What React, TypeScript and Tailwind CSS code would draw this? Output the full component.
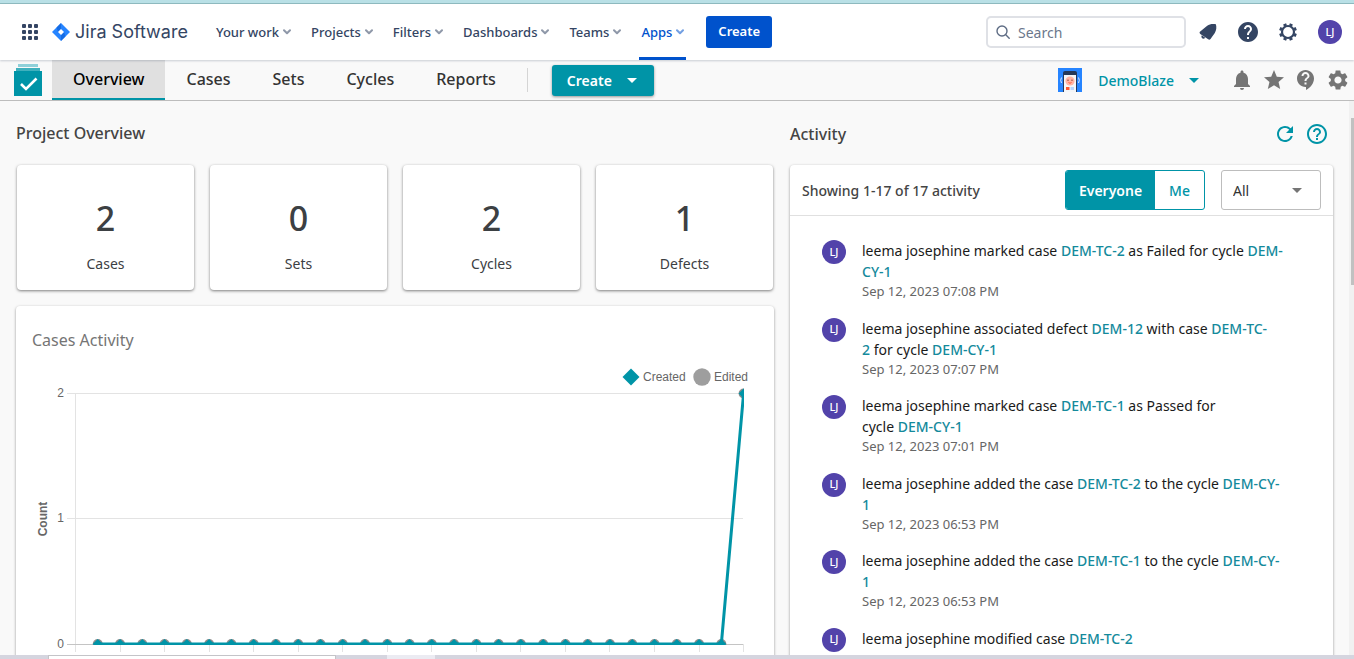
import React from "react";
import {
  MdArrowDropDown,
  MdContactSupport,
  MdHelp,
  MdHelpOutline,
  MdNotifications,
  MdRefresh,
  MdSettings,
  MdStar,
} from "react-icons/md";

const siteLinks = ["Your work", "Projects", "Filters", "Dashboards", "Teams", "Apps"];
const tabs = ["Overview", "Cases", "Sets", "Cycles", "Reports"];
const stats = [
  { value: 2, label: "Cases" },
  { value: 0, label: "Sets" },
  { value: 2, label: "Cycles" },
  { value: 1, label: "Defects" },
];

type Part = string | { link: string };
const activity: { parts: Part[]; time?: string }[] = [
  {
    parts: ["leema josephine marked case ", { link: "DEM-TC-2" }, " as Failed for cycle\u00a0", { link: "DEM-CY-1" }],
    time: "Sep 12, 2023 07:08 PM",
  },
  {
    parts: ["leema josephine associated defect ", { link: "DEM-12" }, " with case ", { link: "DEM-TC-2" }, "\u00a0for cycle ", { link: "DEM-CY-1" }],
    time: "Sep 12, 2023 07:07 PM",
  },
  {
    parts: ["leema josephine marked case ", { link: "DEM-TC-1" }, " as Passed for cycle\u00a0", { link: "DEM-CY-1" }],
    time: "Sep 12, 2023 07:01 PM",
  },
  {
    parts: ["leema josephine added the case ", { link: "DEM-TC-2" }, " to the cycle ", { link: "DEM-CY-1" }],
    time: "Sep 12, 2023 06:53 PM",
  },
  {
    parts: ["leema josephine added the case ", { link: "DEM-TC-1" }, " to the cycle ", { link: "DEM-CY-1" }],
    time: "Sep 12, 2023 06:53 PM",
  },
  {
    parts: ["leema josephine modified case ", { link: "DEM-TC-2" }],
  },
];

function Chevron() {
  return (
    <svg width="8" height="6" viewBox="0 0 8 6" fill="none" stroke="currentColor" strokeWidth="2" strokeLinecap="round" strokeLinejoin="round" className="opacity-55" aria-hidden="true">
      <path d="M1 1.2 4 4.2 7 1.2" />
    </svg>
  );
}

function JiraMark() {
  return (
    <svg width="18" height="18" viewBox="0 0 18 18" aria-hidden="true">
      <path d="M9 0 18 9 9 18 0 9Z" fill="#2684ff" />
      <path d="M9 0v6L6 9 4.500 4.500Z" fill="#0f62d9" opacity="0.7" />
      <path d="M9 18v-6l3-3 1.500 4.500Z" fill="#0f62d9" opacity="0.7" />
      <path d="M9 6 12 9 9 12 6 9Z" fill="#fff" />
    </svg>
  );
}

function AppGrid() {
  return (
    <svg width="16" height="16" viewBox="0 0 16 16" fill="#344563" aria-hidden="true">
      {[0, 6, 12].map((y) => [0, 6, 12].map((x) => <rect key={`${x}-${y}`} x={x} y={y} width="4" height="4" rx="1" />))}
    </svg>
  );
}

function Gear() {
  return (
    <svg width="18" height="18" viewBox="-9 -9 18 18" fill="none" stroke="#344563" aria-hidden="true">
      <circle r="6" strokeWidth="2.2" />
      {[0, 45, 90, 135, 180, 225, 270, 315].map((a) => (
        <path key={a} d="M0-6.500V-8.900" strokeWidth="3.2" transform={`rotate(${a + 22.5})`} />
      ))}
    </svg>
  );
}

function NotificationBell() {
  return (
    <svg width="18" height="18" viewBox="0 0 18 18" fill="#344563" aria-hidden="true">
      <path d="M16.900 1.300c-3-.6-6.400-.3-8.700 1.500L1.200 8.600c-.9.8-.8 1.600.1 2.300l7.900 5.400c.9.7 1.700.5 2.300-.4l4.300-6c1.700-2.600 1.900-5.800 1.100-8.600Z" />
      <path d="M2.800 12.300 6.200 14.800c-.8 1-2.200 1.200-3.100.4-.8-.7-.9-1.900-.3-2.900Z" />
    </svg>
  );
}

function AppLogo() {
  return (
    <svg width="28" height="32" viewBox="0 0 28 32" aria-hidden="true">
      <path d="M4 0h20v3H4z" fill="#8fd0d9" />
      <path d="M2 4h24v3H2z" fill="#3fb0bd" />
      <path d="M0 7h28v25H0z" fill="#0094a7" />
      <path d="m7 20 5 5 10.500-10.500" fill="none" stroke="#fff" strokeWidth="2.6" />
    </svg>
  );
}

function ProjectIcon() {
  return (
    <svg width="24" height="24" viewBox="0 0 24 24" aria-hidden="true">
      <path d="M0 0h24v24H0z" fill="#2684ff" />
      <path d="M5 24V5a2 2 0 0 1 2-2h10a2 2 0 0 1 2 2v19Z" fill="#253858" />
      <path d="M6 7h12v17H6z" fill="#f4f5f7" />
      <circle cx="12" cy="13" r="4.600" fill="#ffb3a3" />
      <path d="M9 12.200h2M13 12.200h2" stroke="#a5604f" strokeWidth="1" />
      <path d="M10.500 14.500q1.500 1.500 3 0" stroke="#ff5630" fill="none" />
      <path d="M8 19h3.500v3H8z" fill="#ff5630" />
      <path d="M12.500 19H16v3h-3.500z" fill="#b3d4ff" />
      <path d="M3.500 9.500q-1.600 2.800 0 5.500M20.500 9.500q1.600 2.800 0 5.500" stroke="#deebff" fill="none" />
    </svg>
  );
}

function Avatar() {
  return (
    <span className="flex size-6 shrink-0 items-center justify-center rounded-full bg-[#5243aa] text-[11px] font-medium text-white">
      LJ
    </span>
  );
}

function CasesChart() {
  const left = 59.5;
  const step = 22.27;
  const base = 338;
  const top = 87.5;
  const xs = Array.from({ length: 30 }, (_, i) => left + (i + 1) * step);
  const yOf = (i: number) => (i === 29 ? top : base);
  return (
    <svg viewBox="0 0 758 390" className="block w-full font-['Liberation_Sans',sans-serif]" role="img" aria-label="Cases created and edited">
      <defs>
        <clipPath id="plot">
          <rect x="59" y="82" width="669" height="257" />
        </clipPath>
      </defs>
      <path d="m615 62.500 8.500 8.500-8.500 8.500-8.500-8.500Z" fill="#0094a7" />
      <circle cx="686" cy="71" r="8.700" fill="#9e9e9e" />
      <g fontSize="12" fill="#666">
        <text x="627" y="75">Created</text>
        <text x="698" y="75">Edited</text>
        <text x="48" y="91" textAnchor="end">2</text>
        <text x="48" y="216" textAnchor="end">1</text>
        <text x="48" y="342" textAnchor="end">0</text>
        <text transform="translate(31 213) rotate(-90)" textAnchor="middle" fontWeight="bold">Count</text>
      </g>
      <g stroke="#e3e3e3" strokeWidth="1">
        <path d="M51 87.500H727M51 212.500H727M59.500 87V346" />
        {Array.from({ length: 16 }, (_, i) => (
          <path key={i} d={`M${Math.floor(left + i * 2 * step) + 0.5} 338V346`} />
        ))}
        <path d="M51 338.500H727" stroke="#c4c4c4" />
      </g>
      <g clipPath="url(#plot)">
        {xs.map((x, i) => (
          <circle key={i} cx={x} cy={yOf(i)} r="5" fill="#8d8d8d" />
        ))}
        <polyline points={xs.map((x, i) => `${x},${yOf(i)}`).join(" ")} fill="none" stroke="#0094a7" strokeWidth="3" strokeLinejoin="round" />
        {xs.map((x, i) => (
          <path key={i} d={`M${x} ${yOf(i) - 5}l5 5-5 5-5-5Z`} fill="#0094a7" />
        ))}
      </g>
    </svg>
  );
}

function SiteHeader() {
  return (
    <header className="relative z-10 flex h-14 shrink-0 items-center bg-white pr-3 pl-[22px] text-[#344563] shadow-[0_1px_2px_rgba(9,30,66,0.2)]">
      <button aria-label="Switch product">
        <AppGrid />
      </button>
      <a href="#" className="ml-[14px] flex items-center gap-[5px] font-['Inter',sans-serif] text-[18px] leading-6 text-[#344563]">
        <JiraMark />
        Jira Software
      </a>
      <nav className="ml-[18px] flex h-full items-center">
        {siteLinks.map((name) => (
          <div key={name} className={name === "Apps" ? "mx-2 flex h-full items-center border-b-3 border-[#0052cc] pt-[3px] text-[#0052cc]" : "mx-2 flex h-full items-center"}>
            <button className="flex items-center gap-1 px-[2px] text-[13px] leading-5 font-medium">
              {name}
              <Chevron />
            </button>
          </div>
        ))}
      </nav>
      <button className="ml-3 h-8 rounded-[3px] bg-[#0052cc] px-3 text-[13px] font-semibold text-white">Create</button>
      <div className="ml-auto flex items-center">
        <label className="flex h-8 w-[200px] items-center gap-2 rounded-[5px] border-2 border-[#dfe1e6] bg-white px-2">
          <svg width="14" height="14" viewBox="0 0 14 14" fill="none" stroke="#5e6c84" strokeWidth="1.400" strokeLinecap="round" className="shrink-0" aria-hidden="true">
            <circle cx="6" cy="6" r="5" />
            <path d="m9.800 9.800 3.400 3.400" />
          </svg>
          <input type="search" aria-label="Search" placeholder="Search" className="w-full min-w-0 bg-transparent text-[14px] outline-none placeholder:text-[#6b778c]" />
        </label>
        <button aria-label="Notifications" className="ml-[13px]"><NotificationBell /></button>
        <button aria-label="Help" className="ml-[19px]"><MdHelp className="size-6" /></button>
        <button aria-label="Settings" className="ml-[19px]"><Gear /></button>
        <button aria-label="Your profile" className="ml-[21px]"><Avatar /></button>
      </div>
    </header>
  );
}

function AppHeader() {
  return (
    <div className="flex h-[41px] shrink-0 items-center border-b border-[#bdbdbd] bg-[#f9f9f9] pr-1 pl-[14px]">
      <AppLogo />
      <nav className="ml-[10px] flex h-full">
        {tabs.map((name) => (
          <a
            key={name}
            href="#"
            className={
              name === "Overview"
                ? "flex items-center border-b-2 border-[#0094a7] bg-[#e0e0e0] px-[21px] text-[16px] font-medium text-black"
                : "flex items-center border-b-2 border-transparent px-[21px] text-[16px] font-medium text-[#333]"
            }
          >
            {name}
          </a>
        ))}
      </nav>
      <div className="ml-[10px] h-6 w-px bg-[#d5d5d5]" />
      <button className="ml-6 flex h-[31px] items-center rounded-[3px] bg-[#0094a7] pr-[10px] pl-[15px] text-[14px] font-semibold text-white shadow-[0_1px_3px_rgba(0,0,0,0.4)]">
        Create
        <MdArrowDropDown className="ml-2 size-6" />
      </button>
      <div className="ml-auto flex items-center text-[#757575]">
        <button className="flex items-center text-[14px] font-medium text-[#0094a7]">
          <ProjectIcon />
          <span className="ml-4">DemoBlaze</span>
          <MdArrowDropDown className="ml-2 size-6" />
        </button>
        <div className="ml-6 flex gap-2">
          <button aria-label="Alerts"><MdNotifications className="size-6" /></button>
          <button aria-label="Favorites"><MdStar className="size-6" /></button>
          <button aria-label="Support"><MdContactSupport className="size-6" /></button>
          <button aria-label="App settings"><MdSettings className="size-6" /></button>
        </div>
      </div>
    </div>
  );
}

function Overview() {
  return (
    <section>
      <h1 className="pt-[21px] text-[16px] leading-[22px] font-medium text-[#444]">Project Overview</h1>
      <div className="mt-[21px] grid grid-cols-4 gap-4 px-px">
        {stats.map((s) => (
          <div key={s.label} className="flex h-[125px] flex-col items-center rounded-[4px] bg-white pt-[33px] text-[#3c4043] shadow-[0_1px_3px_rgba(0,0,0,0.5)]">
            <span className="text-[34px] leading-10 font-medium">{s.value}</span>
            <span className="mt-4 text-[14px] leading-5">{s.label}</span>
          </div>
        ))}
      </div>
      <div className="relative mt-4 rounded-[4px] bg-white shadow-[0_1px_3px_rgba(0,0,0,0.4)]">
        <h2 className="absolute top-[23px] left-4 text-[16px] leading-[22px] text-[#757575]">Cases Activity</h2>
        <CasesChart />
      </div>
    </section>
  );
}

function Activity() {
  return (
    <section>
      <div className="flex items-center justify-between pt-[21px] pr-1">
        <h2 className="text-[16px] leading-6 font-medium text-[#444]">Activity</h2>
        <div className="flex gap-2 text-[#0094a7]">
          <button aria-label="Refresh"><MdRefresh className="size-6" /></button>
          <button aria-label="About activity"><MdHelpOutline className="size-6" /></button>
        </div>
      </div>
      <div className="mt-[19px] rounded-[4px] bg-white pb-6 shadow-[0_1px_3px_rgba(0,0,0,0.4)]">
        <div className="flex h-[51px] items-center border-b border-[#e0e0e0] px-3">
          <p className="mr-auto text-[14px] font-medium text-[#444]">Showing 1-17 of 17 activity</p>
          <div className="flex h-10 overflow-hidden rounded-[3px] border border-[#0094a7] text-[14px]">
            <button className="bg-[#0094a7] px-[13px] font-semibold text-white">Everyone</button>
            <button className="px-[14px] font-medium text-[#0094a7]">Me</button>
          </div>
          <div className="relative ml-4">
            <select aria-label="Activity type" className="h-10 w-[100px] appearance-none rounded-[3px] border border-[#bdbdbd] bg-white pl-[11px] text-[14px] text-[#333]">
              <option>All</option>
            </select>
            <MdArrowDropDown className="pointer-events-none absolute top-2 right-3 size-6 text-[#757575]" />
          </div>
        </div>
        <ul className="pt-6 pr-12 pl-8">
          {activity.map((item, i) => (
            <li key={i} className="flex gap-4 pb-4">
              <div><Avatar /></div>
              <div>
                <p className="text-[14px] leading-[21px] text-[#1a1a1a]">
                  {item.parts.map((part, j) =>
                    typeof part === "string" ? (
                      part
                    ) : (
                      <a key={j} href="#" className="font-medium text-[#148a9c]">{part.link}</a>
                    )
                  )}
                </p>
                {item.time && <p className="text-[13px] leading-normal text-[#666]">{item.time}</p>}
              </div>
            </li>
          ))}
        </ul>
      </div>
    </section>
  );
}

export default function App() {
  return (
    <div className="flex h-screen flex-col overflow-hidden bg-[#f9f9f9] font-['Noto_Sans',sans-serif]">
      <div className="h-1 shrink-0 border-b border-[#8fbcc1] bg-[#b9e0e6]" />
      <SiteHeader />
      <AppHeader />
      <div className="flex min-h-0 flex-1 overflow-hidden">
        <main className="grid min-w-0 flex-1 grid-cols-[758fr_543fr] gap-4 px-4">
          <Overview />
          <Activity />
        </main>
        <div className="w-[5px] bg-[#f1f1f1] pt-[17px] pl-[2px]">
          <div className="h-[167px] bg-[#c1c1c1]" />
        </div>
      </div>
      <div className="flex h-1 shrink-0 bg-[#d5d5df]">
        <div className="ml-12 w-[288px] border border-b-0 border-[#c4c4c8] bg-white" />
        <div className="ml-[51px] w-12 bg-[#ebebf2]" />
      </div>
    </div>
  );
}
